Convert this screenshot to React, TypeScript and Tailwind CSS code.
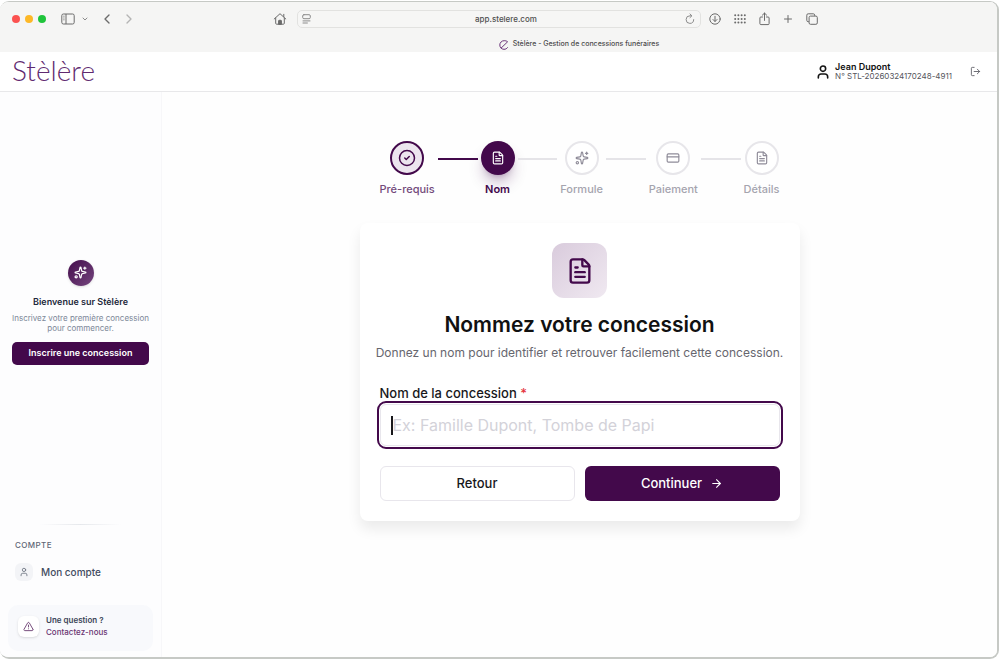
import { Fragment } from "react";
import {
  ArrowRight,
  ChevronDown,
  ChevronLeft,
  ChevronRight,
  CircleCheck,
  CreditCard,
  FileText,
  LogOut,
  Plus,
  Sparkles,
  TriangleAlert,
  User,
} from "lucide-react";
import type { LucideIcon } from "lucide-react";

type StepState = "done" | "current" | "todo";

const steps: { label: string; icon: LucideIcon; state: StepState }[] = [
  { label: "Pré-requis", icon: CircleCheck, state: "done" },
  { label: "Nom", icon: FileText, state: "current" },
  { label: "Formule", icon: Sparkles, state: "todo" },
  { label: "Paiement", icon: CreditCard, state: "todo" },
  { label: "Détails", icon: FileText, state: "todo" },
];

const circleStyles: Record<StepState, string> = {
  done: "border-2 border-[#43094b] bg-[#ece5ee] text-[#43094b]",
  current: "bg-[#43094b] text-white shadow-lg shadow-[#43094b]/30",
  todo: "border-2 border-[#e7e6ea] bg-white text-[#8f8c99]",
};

const labelStyles: Record<StepState, string> = {
  done: "font-medium text-[#734a7b]",
  current: "font-semibold text-[#43094b]",
  todo: "font-medium text-[#a5a4ae]",
};

function SidebarIcon() {
  return (
    <svg width="14" height="12" viewBox="0 0 14 12" fill="none" stroke="currentColor">
      <rect x="0.8" y="1" width="12.4" height="10" rx="1.6" />
      <path d="M5 1v10" />
      <path d="M2.2 3.2h1.4M2.2 5h1.4M2.2 6.8h1.4" strokeWidth="0.7" />
    </svg>
  );
}

function HomeIcon() {
  return (
    <svg width="14" height="14" viewBox="0 0 14 14" fill="none" stroke="currentColor" strokeLinecap="round" strokeLinejoin="round">
      <path d="M1.2 7 7 1.7 12.8 7M2.7 6v5.3a.9.9 0 0 0 .9.9h6.8a.9.9 0 0 0 .9-.9V6M10.8 2.3v2.4" />
      <path d="M5.6 12V8.8a.5.5 0 0 1 .5-.5h1.8a.5.5 0 0 1 .5.5V12z" fill="currentColor" />
    </svg>
  );
}

function ReaderIcon() {
  return (
    <svg width="9" height="10" viewBox="0 0 9 10" fill="none" stroke="currentColor" strokeLinecap="round">
      <rect x="0.7" y="0.7" width="7.6" height="4" rx="1.2" />
      <path d="M1 6.9h7M1 9h4.4" />
    </svg>
  );
}

function ReloadIcon() {
  return (
    <svg width="10" height="12" viewBox="0 0 10 12" fill="none" stroke="currentColor" strokeLinecap="round" strokeLinejoin="round">
      <path d="M8.7 6.6A3.8 3.8 0 1 1 5 2.8h1.6" />
      <path d="M5 1l1.9 1.8L5 4.6" />
    </svg>
  );
}

function DownloadIcon() {
  return (
    <svg width="12" height="12" viewBox="0 0 12 12" fill="none" stroke="currentColor" strokeLinecap="round" strokeLinejoin="round">
      <circle cx="6" cy="6" r="5.2" />
      <path d="M6 3.3v5M4 6.5l2 2 2-2" />
    </svg>
  );
}

function GridIcon() {
  return (
    <svg width="12" height="10" viewBox="0 0 12 10" fill="currentColor">
      {[1.3, 4.9, 8.5].map((y) =>
        [1.2, 4.4, 7.6, 10.8].map((x) => <circle key={`${x}-${y}`} cx={x} cy={y} r="1" />),
      )}
    </svg>
  );
}

function ShareIcon() {
  return (
    <svg width="11" height="14" viewBox="0 0 11 14" fill="none" stroke="currentColor" strokeLinecap="round" strokeLinejoin="round">
      <path d="M3.5 5H1.9a1 1 0 0 0-1 1v5.6a1 1 0 0 0 1 1h7.2a1 1 0 0 0 1-1V6a1 1 0 0 0-1-1H7.5" />
      <path d="M5.5 8.4V1.2M3.4 3.1l2.1-2 2.1 2" />
    </svg>
  );
}

function TabsIcon() {
  return (
    <svg width="12" height="12" viewBox="0 0 12 12" fill="none" stroke="currentColor" strokeLinejoin="round">
      <rect x="3.1" y="3.1" width="8.2" height="8.2" rx="1.4" />
      <path d="M3 8.7h-.8A1.4 1.4 0 0 1 .8 7.3V2.2A1.4 1.4 0 0 1 2.2.8h5.1a1.4 1.4 0 0 1 1.4 1.4V3" />
    </svg>
  );
}

function Favicon() {
  return (
    <svg width="10" height="10" viewBox="0 0 10 10" fill="none" stroke="#6b3579" strokeLinecap="round">
      <path d="M2.2 8 8.6 1.8C7.6.9 6.4.7 5.2.7A4.3 4.3 0 0 0 .8 5c0 2.500 1.900 4.300 4.200 4.300 1.600 0 2.700-.6 3.500-1.700" />
    </svg>
  );
}

function BrowserBar() {
  return (
    <div className="bg-[#f5f5f4] text-[#6b6b6b]">
      <div className="grid h-[33px] grid-cols-[1fr_404px_1fr] items-center">
        <div className="flex items-center justify-between pr-[10px] pl-3">
          <div className="flex items-center">
            <div className="flex gap-[5px]">
              <span className="size-2 rounded-full bg-[#fb5250]" />
              <span className="size-2 rounded-full bg-[#fdb827]" />
              <span className="size-2 rounded-full bg-[#1fc43b]" />
            </div>
            <button aria-label="Barre latérale" className="ml-[15px]"><SidebarIcon /></button>
            <button aria-label="Groupes d’onglets" className="ml-[6px] text-[#8b8b8b]"><ChevronDown size={8} strokeWidth={3} /></button>
            <button aria-label="Précédent" className="ml-[10px]"><ChevronLeft size={16} strokeWidth={2} /></button>
            <button aria-label="Suivant" className="ml-[6px] text-[#b4b4b4]"><ChevronRight size={16} strokeWidth={2} /></button>
          </div>
          <button aria-label="Accueil"><HomeIcon /></button>
        </div>
        <div className="flex h-[18px] items-center justify-between rounded-[5px] border border-[#e2e2e0] bg-[#f6f6f5] px-1 text-[#8c8c8c]">
          <ReaderIcon />
          <span className="pl-4 text-[8px] font-medium text-[#505050]">app.stelere.com</span>
          <button aria-label="Recharger"><ReloadIcon /></button>
        </div>
        <div className="flex items-center gap-3 pl-2">
          <button aria-label="Téléchargements"><DownloadIcon /></button>
          <button aria-label="Favoris" className="ml-[1px]"><GridIcon /></button>
          <button aria-label="Partager" className="ml-[1px]"><ShareIcon /></button>
          <button aria-label="Nouvel onglet"><Plus size={12} strokeWidth={2} /></button>
          <button aria-label="Onglets"><TabsIcon /></button>
        </div>
      </div>
      <div className="flex h-[17px] items-center justify-center gap-1 pt-[2px] pl-[161px] text-[7px] font-medium text-[#4c4c4c]">
        <Favicon />
        Stèlère - Gestion de concessions funéraires
      </div>
    </div>
  );
}

function AppHeader() {
  return (
    <header className="flex h-10 items-center justify-between border-b border-[#e8e8ea] bg-white pr-4 pl-3">
      <a href="#accueil" className="pb-1 font-[Lato,sans-serif] text-[28px] leading-8 font-light text-[#5f2a70]">Stèlère</a>
      <div className="flex items-center">
        <User size={16} strokeWidth={2.4} className="text-[#151515]" />
        <div className="ml-1">
          <p className="text-[9px] leading-[10px] font-semibold text-[#111111]">Jean Dupont</p>
          <p className="text-[8px] leading-[9px] text-[#55555c]">N° STL-20260324170248-4911</p>
        </div>
        <button aria-label="Se déconnecter" className="ml-[18px] text-[#62626a]"><LogOut size={11} /></button>
      </div>
    </header>
  );
}

function Sidebar() {
  return (
    <aside className="flex w-[162px] shrink-0 flex-col border-r border-[#f7f7f9] bg-[#fdfdfe]">
      <div className="flex grow flex-col items-center justify-center px-3 pt-2 text-center">
        <div className="flex size-[26px] items-center justify-center rounded-full bg-linear-to-br from-[#43094b] to-[#75467f] text-white shadow-sm">
          <Sparkles size={13} strokeWidth={2.2} />
        </div>
        <h2 className="mt-[9px] text-[9px] leading-[14px] font-semibold text-[#1e293b]">Bienvenue sur Stèlère</h2>
        <p className="mt-1 text-[8px] leading-[10px] text-[#7c8798]">Inscrivez votre première concession pour commencer.</p>
        <button className="mt-[9px] h-[23px] w-full rounded-[5px] bg-[#43094b] text-[9px] font-semibold text-white">Inscrire une concession</button>
      </div>
      <div className="mx-10 h-px bg-linear-to-r from-transparent via-[#e6e8ec] to-transparent" />
      <nav className="px-[15px] pt-[14px]">
        <h3 className="text-[8px] leading-3 font-medium tracking-wider text-[#5d6675]">COMPTE</h3>
        <a href="#compte" className="mt-3 flex items-center gap-2 text-[10px] leading-[18px] font-medium text-[#424c5e]">
          <span className="flex size-[18px] items-center justify-center rounded-md bg-[#f3f4f7] text-[#6b7280]">
            <User size={10} />
          </span>
          Mon compte
        </a>
      </nav>
      <div className="mx-2 mt-6 mb-[6px] flex h-[46px] items-center gap-[7px] rounded-[10px] bg-[#f8f9fc] px-[10px] pb-1">
        <span className="flex size-[21px] items-center justify-center rounded-md bg-white text-[#6c3f73] shadow-sm">
          <TriangleAlert size={11} />
        </span>
        <div className="text-[8px] leading-3">
          <p className="font-semibold text-[#3b4557]">Une question ?</p>
          <a href="#contact" className="block font-medium text-[#6a3572]">Contactez-nous</a>
        </div>
      </div>
    </aside>
  );
}

function Stepper() {
  return (
    <ol className="flex w-full items-start px-5">
      {steps.map(({ label, icon: Icon, state }, index) => (
        <Fragment key={label}>
          {index > 0 && (
            <li
              aria-hidden="true"
              className={`mx-[3px] mt-[17px] h-[2px] grow ${index === 1 ? "bg-[#43094b]" : "bg-[#e5e4e8]"}`}
            />
          )}
          <li className="flex min-w-[34px] flex-col items-center" aria-current={state === "current" ? "step" : undefined}>
            <span className={`flex size-[34px] items-center justify-center rounded-full ${circleStyles[state]}`}>
              <Icon size={state === "done" ? 18 : 14} strokeWidth={2} />
            </span>
            <span className={`mt-[6px] text-[11px] leading-4 whitespace-nowrap ${labelStyles[state]}`}>{label}</span>
          </li>
        </Fragment>
      ))}
    </ol>
  );
}

function NameForm() {
  return (
    <form className="mt-[26px] w-full rounded-lg bg-white p-5 shadow-[0_8px_14px_rgba(0,0,0,0.08)]">
      <div className="mx-auto flex size-[55px] items-center justify-center rounded-xl bg-linear-to-br from-[#d9cbdc] to-[#f0e9f1] text-[#43094b]">
        <FileText size={28} strokeWidth={2} />
      </div>
      <h1 className="mt-[13px] text-center text-[21px] leading-7 font-semibold text-[#111111]">Nommez votre concession</h1>
      <p className="-mx-3 mt-1 text-center text-[12px] leading-5 text-[#66666e]">
        Donnez un nom pour identifier et retrouver facilement cette concession.
      </p>
      <label htmlFor="nom" className="mt-[22px] block text-[13px] leading-4 font-medium text-[#18181b]">
        Nom de la concession <span className="text-[#e5353e]">*</span>
      </label>
      <div className="relative mt-[3px]">
        <input
          id="nom"
          type="text"
          placeholder="Ex: Famille Dupont, Tombe de Papi"
          className="block h-[42px] w-full rounded-md border border-[#e8e6ec] bg-white px-3 text-[16px] text-[#18181b] caret-transparent outline-2 outline-offset-1 outline-[#43094b] placeholder:text-[#d3d2d9]"
        />
        <span aria-hidden="true" className="absolute top-3 left-[11px] h-[19px] w-[2px] bg-[#18181b]" />
      </div>
      <div className="mt-5 grid grid-cols-2 gap-[10px]">
        <button type="button" className="h-[35px] rounded-md border border-[#e8e6ec] bg-white text-[13px] font-medium text-[#18181b]">Retour</button>
        <button type="submit" className="flex h-[35px] items-center justify-center gap-2 rounded-md bg-[#43094b] text-[13px] font-medium text-white">
          Continuer
          <ArrowRight size={13} />
        </button>
      </div>
    </form>
  );
}

export default function App() {
  return (
    <div className="flex min-h-screen flex-col bg-white pt-px pr-px pb-px font-[Inter,sans-serif]">
      <div className="flex grow flex-col overflow-hidden rounded-[9px] border-t border-r-2 border-b-2 border-[#c6c9c5] bg-white">
        <BrowserBar />
        <AppHeader />
        <div className="flex grow">
          <Sidebar />
          <main className="flex grow justify-center bg-[#fefefe]">
            <div className="w-full max-w-[440px] pt-[49px]">
              <Stepper />
              <NameForm />
            </div>
          </main>
        </div>
      </div>
    </div>
  );
}
